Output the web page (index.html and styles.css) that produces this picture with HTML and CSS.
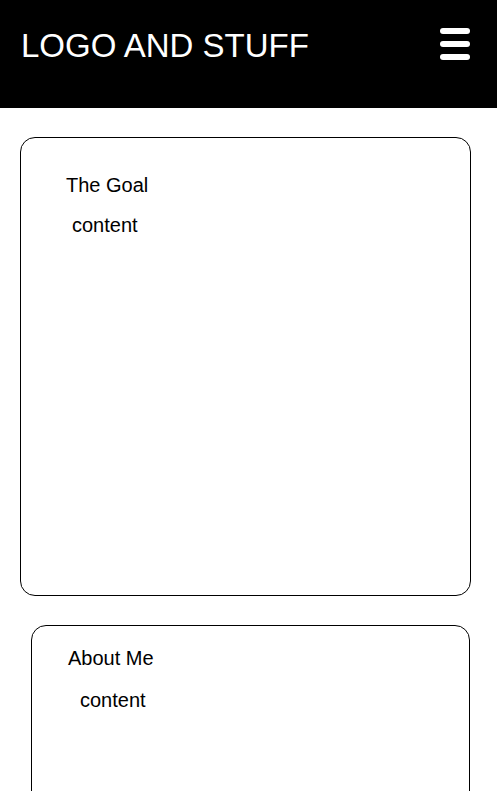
FILE: index.html
```html
<!DOCTYPE html>
<html>
<head>
<meta charset="utf-8">
<link rel="stylesheet" href="styles.css">
</head>
<body>
<header class="topbar">
  <div class="logo">LOGO AND STUFF</div>
  <div class="burger"><span></span><span></span><span></span></div>
</header>
<main>
  <section class="card card-goal">
    <h2 class="card-title">The Goal</h2>
    <p class="card-body">content</p>
  </section>
  <section class="card card-about">
    <h2 class="card-title">About Me</h2>
    <p class="card-body">content</p>
  </section>
</main>
</body>
</html>
```
FILE: styles.css
```css
html, body {
  margin: 0;
  padding: 0;
  background: #fff;
  font-family: "Liberation Sans", Arial, sans-serif;
  color: #000;
}
.topbar {
  background: #000;
  height: 108px;
  display: flex;
  justify-content: space-between;
  align-items: flex-start;
  padding: 0 27px 0 21px;
  box-sizing: border-box;
}
.logo {
  color: #fff;
  font-size: 33px;
  line-height: 37px;
  margin-top: 27px;
}
.burger {
  margin-top: 28px;
  display: flex;
  flex-direction: column;
  gap: 7px;
}
.burger span {
  display: block;
  width: 30px;
  height: 6px;
  border-radius: 3px;
  background: #fff;
}
main {
  display: flex;
  flex-direction: column;
}
.card {
  border: 1px solid #000;
  border-radius: 15px;
  box-sizing: border-box;
}
.card-title, .card-body {
  font-size: 20px;
  font-weight: normal;
  line-height: 23px;
  margin: 0;
}
.card-goal {
  margin: 29px 0 0 20px;
  width: 451px;
  height: 459px;
  padding: 36px 0 0 45px;
}
.card-goal .card-body {
  margin: 17px 0 0 6px;
}
.card-about {
  margin: 29px 0 0 31px;
  width: 439px;
  height: 200px;
  padding: 21px 0 0 36px;
}
.card-about .card-body {
  margin: 19px 0 0 12px;
}
```
